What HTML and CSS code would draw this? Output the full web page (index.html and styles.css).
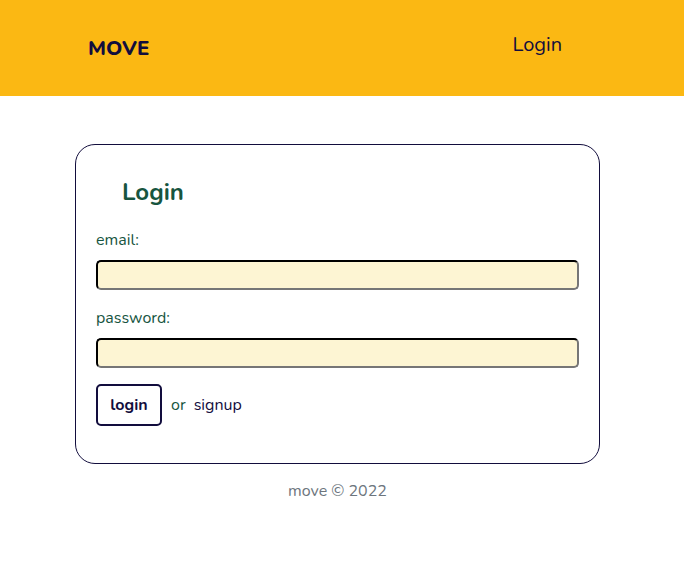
FILE: index.html
```html
<!DOCTYPE html>
<html>
<head>
<meta charset="utf-8">
<link rel="stylesheet" href="styles.css">
</head>
<body>
<header class="topbar">
  <div class="brand">MOVE</div>
  <a class="nav-link" href="#">Login</a>
</header>
<main class="main">
  <section class="card">
    <h1 class="card-title">Login</h1>
    <label class="field-label" for="email">email:</label>
    <input class="field" id="email" type="text">
    <label class="field-label" for="password">password:</label>
    <input class="field" id="password" type="password">
    <div class="actions">
      <button class="btn">login</button>
      <span class="or">or</span>
      <a class="signup" href="#">signup</a>
    </div>
  </section>
  <footer class="footer">move © 2022</footer>
</main>
</body>
</html>
```
FILE: styles.css
```css
* { box-sizing: border-box; }
body {
  margin: 0;
  font-family: "Nunito", "Lato", "Noto Sans", sans-serif;
  background: #fff;
}
.topbar {
  height: 96px;
  background: #fbb813;
  display: flex;
  align-items: center;
  justify-content: space-between;
  padding: 0 122px 0 88px;
}
.brand {
  font-weight: 800;
  font-size: 20.5px;
  color: #120d3d;
  letter-spacing: 0.1px;
  margin-top: -1px;
}
.nav-link {
  font-size: 20px;
  color: #120d3d;
  text-decoration: none;
  margin-top: -7px;
}
.main {
  width: 525px;
  margin: 48px 0 0 75px;
}
.card {
  border: 1px solid #120d3d;
  border-radius: 20px;
  padding: 31px 20px 37px 20px;
  display: flex;
  flex-direction: column;
}
.card-title {
  margin: 0 0 21px 26px;
  font-size: 24px;
  font-weight: 700;
  color: #17553f;
}
.field-label {
  font-size: 16px;
  color: #17553f;
  margin-bottom: 9px;
}
.field {
  height: 30px;
  width: 483px;
  background: #fdf5d3;
  border: 2px inset #767676;
  border-top-color: #1a1a1a;
  border-left-color: #1a1a1a;
  border-radius: 5px;
  margin-bottom: 17px;
}
.field + .actions,
.actions {
  display: flex;
  align-items: center;
  gap: 9px;
  margin-top: -1px;
}
.btn {
  width: 66px;
  height: 42px;
  background: #fff;
  border: 2px solid #120d3d;
  border-radius: 5px;
  font-family: inherit;
  font-weight: 700;
  font-size: 16px;
  color: #120d3d;
  padding: 0;
}
.or {
  font-size: 16px;
  color: #17553f;
}
.signup {
  font-size: 16px;
  color: #120d3d;
  text-decoration: none;
  margin-left: -1px;
}
.footer {
  text-align: center;
  color: #6c757d;
  font-size: 16px;
  margin-top: 16px;
}
```
